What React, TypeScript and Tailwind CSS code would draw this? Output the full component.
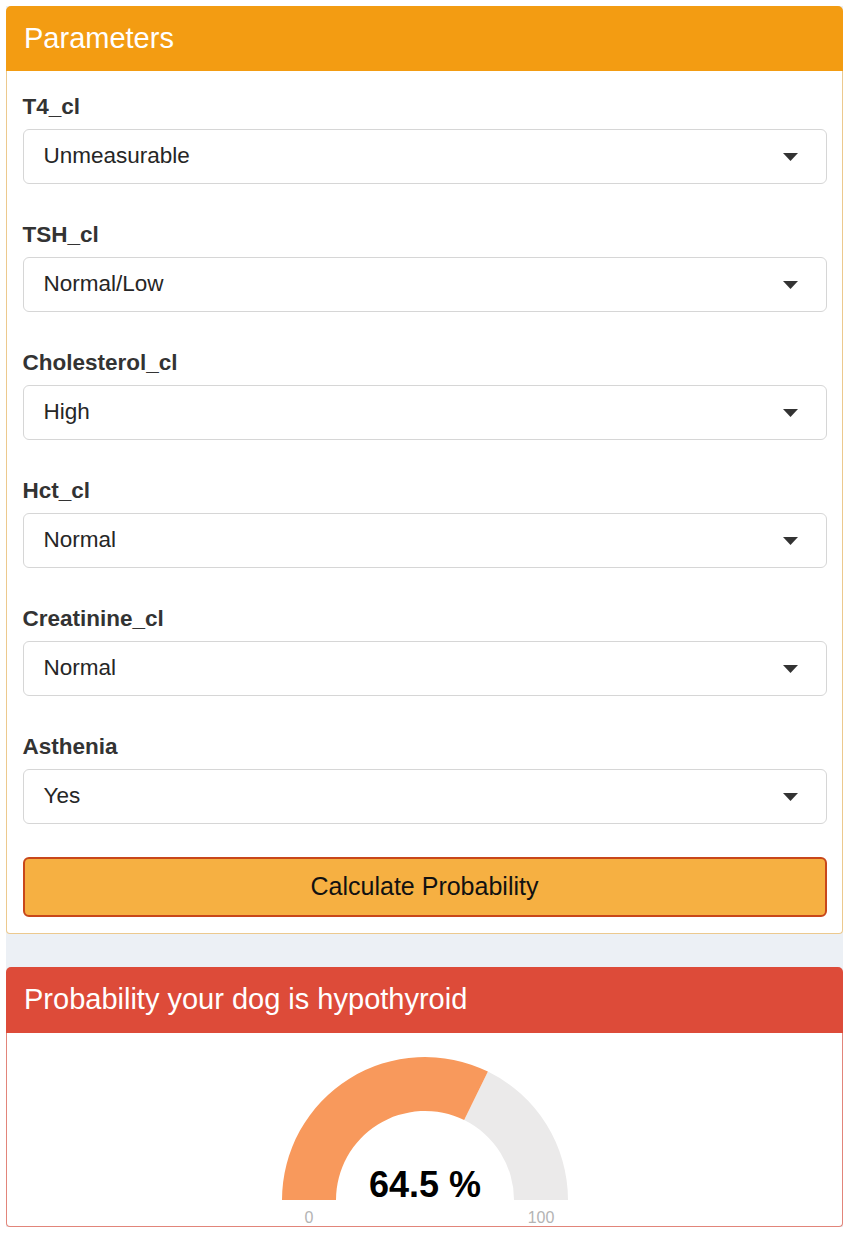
import React from "react";

const fields: { label: string; value: string }[] = [
  { label: "T4_cl", value: "Unmeasurable" },
  { label: "TSH_cl", value: "Normal/Low" },
  { label: "Cholesterol_cl", value: "High" },
  { label: "Hct_cl", value: "Normal" },
  { label: "Creatinine_cl", value: "Normal" },
  { label: "Asthenia", value: "Yes" },
];

function Field({ label, value }: { label: string; value: string }) {
  return (
    <div className="flex flex-col">
      <div className="h-[30px] flex items-center text-[22.5px] font-bold text-[#333333] leading-none">
        {label}
      </div>
      <div className="mt-[7px] h-[55px] rounded-[6px] border border-[#d6d6d6] bg-white flex items-center justify-between pl-[20px] pr-[28px]">
        <span className="text-[22.5px] text-[#262626] leading-none">{value}</span>
        <svg width="15" height="8" viewBox="0 0 15 8">
          <polygon points="0,0 15,0 7.5,8" fill="#333333" />
        </svg>
      </div>
    </div>
  );
}

function Gauge() {
  const cx = 150;
  const cy = 167;
  const R = 143;
  const r = 89;
  const v = 0.645;
  const a = Math.PI * (1 - v);
  const ox = cx + R * Math.cos(a);
  const oy = cy - R * Math.sin(a);
  const ix = cx + r * Math.cos(a);
  const iy = cy - r * Math.sin(a);
  const orange = `M ${cx - R} ${cy} A ${R} ${R} 0 0 1 ${ox} ${oy} L ${ix} ${iy} A ${r} ${r} 0 0 0 ${cx - r} ${cy} Z`;
  const grey = `M ${ox} ${oy} A ${R} ${R} 0 0 1 ${cx + R} ${cy} L ${cx + r} ${cy} A ${r} ${r} 0 0 0 ${ix} ${iy} Z`;
  return (
    <svg width="300" height="193" viewBox="0 0 300 193" className="block">
      <path d={grey} fill="#ebeaea" />
      <path d={orange} fill="#f8995c" />
      <text
        x={cx}
        y={164}
        textAnchor="middle"
        fontFamily="'Liberation Sans', Arial, sans-serif"
        fontWeight="700"
        fontSize="36"
        fill="#000"
      >
        64.5 %
      </text>
      <text
        x={cx - (R + r) / 2}
        y={190}
        textAnchor="middle"
        fontFamily="'Liberation Sans', Arial, sans-serif"
        fontSize="16"
        fill="#b4b4b4"
      >
        0
      </text>
      <text
        x={cx + (R + r) / 2}
        y={190}
        textAnchor="middle"
        fontFamily="'Liberation Sans', Arial, sans-serif"
        fontSize="16"
        fill="#b4b4b4"
      >
        100
      </text>
    </svg>
  );
}

export default function App() {
  return (
    <div
      className="bg-white pl-[6px] pr-[8px] pt-[6px] pb-[7px]"
      style={{ fontFamily: "'Liberation Sans', Arial, Helvetica, sans-serif" }}
    >
      <div className="bg-[#ecf0f5] flex flex-col gap-[33px]">
        {/* Parameters box */}
        <div className="flex flex-col">
          <div className="h-[65px] bg-[#f39c12] rounded-t-[5px] flex items-center pl-[18px]">
            <span className="text-white text-[29px] leading-none">Parameters</span>
          </div>
          <div className="bg-white border-x-[1.5px] border-b-[1.5px] border-[#ecc98e] rounded-b-[4px] px-[15.5px] pt-[21px] pb-[15.5px] flex flex-col">
            <div className="flex flex-col gap-[36px]">
              {fields.map((f) => (
                <Field key={f.label} label={f.label} value={f.value} />
              ))}
            </div>
            <button className="mt-[33px] h-[60px] w-full rounded-[6px] border-2 border-[#c8471a] bg-[#f6b042] text-[25px] text-[#111] flex items-center justify-center">
              Calculate Probability
            </button>
          </div>
        </div>

        {/* Result box */}
        <div className="flex flex-col">
          <div className="h-[66px] bg-[#dd4b39] rounded-t-[5px] flex items-center pl-[18px]">
            <span className="text-white text-[29px] leading-none">
              Probability your dog is hypothyroid
            </span>
          </div>
          <div className="bg-white border-x-[1.5px] border-b-[1.5px] border-[#e2857a] rounded-b-[4px] flex justify-center">
            <Gauge />
          </div>
        </div>
      </div>
    </div>
  );
}
